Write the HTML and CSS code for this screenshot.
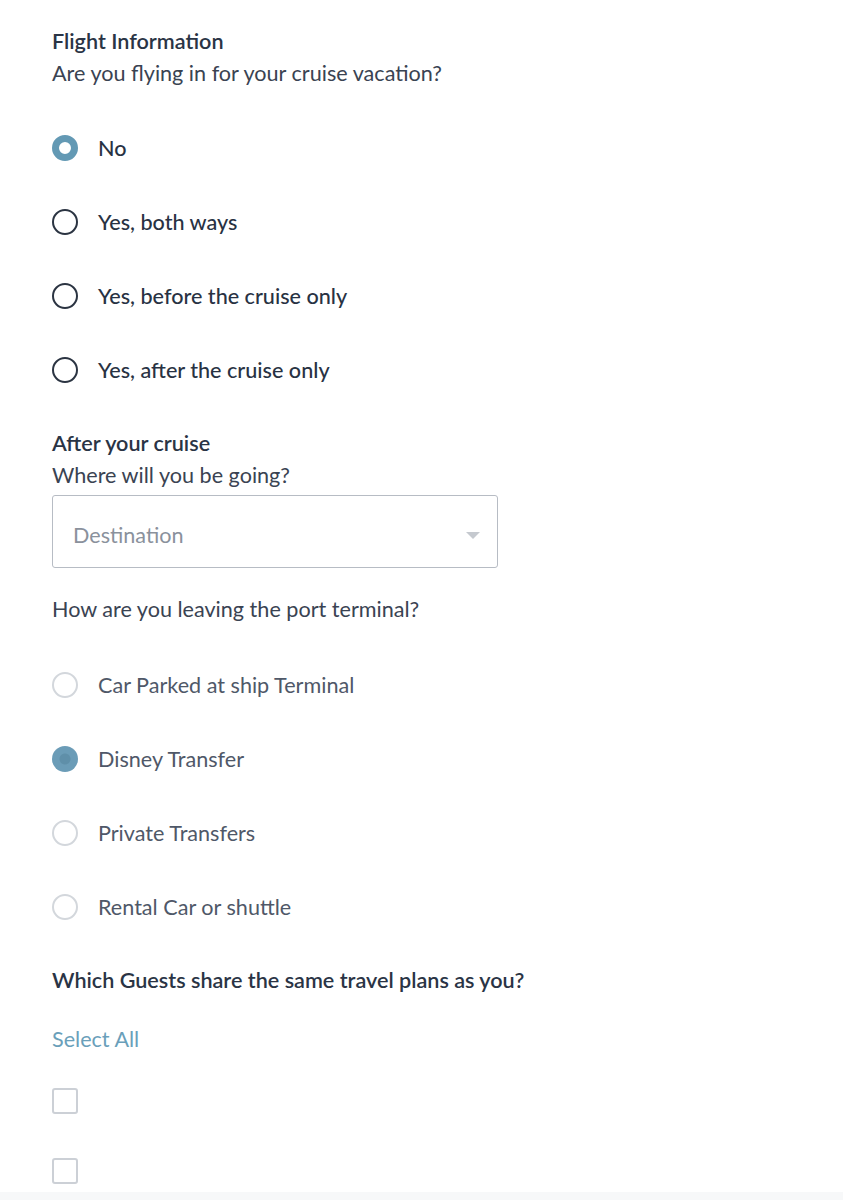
FILE: index.html
```html
<!DOCTYPE html>
<html lang="en">
<head>
<meta charset="utf-8">
<title>Flight Information</title>
<link rel="stylesheet" href="styles.css">
</head>
<body>
<main class="form">
  <section class="group">
    <h2 class="title">Flight Information</h2>
    <p class="question">Are you flying in for your cruise vacation?</p>
    <ul class="options dark">
      <li class="option"><span class="radio checked-ring"></span><span class="label">No</span></li>
      <li class="option"><span class="radio"></span><span class="label">Yes, both ways</span></li>
      <li class="option"><span class="radio"></span><span class="label">Yes, before the cruise only</span></li>
      <li class="option"><span class="radio"></span><span class="label">Yes, after the cruise only</span></li>
    </ul>
  </section>

  <section class="group after">
    <h2 class="title">After your cruise</h2>
    <p class="question">Where will you be going?</p>
    <div class="select">
      <span class="placeholder">Destination</span>
      <span class="caret"></span>
    </div>
    <p class="question leaving">How are you leaving the port terminal?</p>
    <ul class="options light">
      <li class="option"><span class="radio"></span><span class="label">Car Parked at ship Terminal</span></li>
      <li class="option"><span class="radio filled"></span><span class="label">Disney Transfer</span></li>
      <li class="option"><span class="radio"></span><span class="label">Private Transfers</span></li>
      <li class="option"><span class="radio"></span><span class="label">Rental Car or shuttle</span></li>
    </ul>
  </section>

  <section class="group guests">
    <h2 class="title">Which Guests share the same travel plans as you?</h2>
    <a class="select-all" href="#">Select All</a>
    <div class="checks">
      <span class="checkbox"></span>
      <span class="checkbox"></span>
    </div>
  </section>
</main>
<div class="footer-band"></div>
</body>
</html>
```

FILE: styles.css
```css
* { box-sizing: border-box; }
html, body { margin: 0; padding: 0; background: #fff; }
body {
  font-family: Lato, "Open Sans", "Liberation Sans", sans-serif;
  color: #2c3544;
  width: 843px;
  height: 1200px;
  overflow: hidden;
  position: relative;
}
.form { padding: 27px 0 0 52px; }
.title {
  margin: 0;
  font-size: 21.6px;
  font-weight: 600;
  line-height: 28px;
  color: #2a3445;
}
.question {
  margin: 4px 0 0;
  font-size: 21.6px;
  line-height: 28px;
  font-weight: 400;
  color: #3a4352;
}
.options { list-style: none; margin: 0; padding: 0; }
.options.dark { margin-top: 24px; }
.option {
  display: flex;
  align-items: center;
  gap: 20px;
  height: 74px;
}
.label { font-size: 21.6px; line-height: 28px; }
.dark .label { color: #283243; font-weight: 500; }
.light .label { color: #4f5868; }
.radio {
  width: 26px; height: 26px;
  border-radius: 50%;
  flex: none;
}
.dark .radio { border: 2.5px solid #2b3442; }
.dark .radio.checked-ring { border: 7px solid #6399b4; }
.light .radio { border: 2px solid #d3d7dc; }
.light .radio.filled {
  border: none;
  background: radial-gradient(circle, #5f8fa9 0 5px, #6b9cb7 6px);
}
.after { margin-top: 22px; }
.select {
  margin-top: 6px;
  width: 446px;
  height: 73px;
  border: 1px solid #b7bcc4;
  border-radius: 3px;
  display: flex;
  align-items: center;
  justify-content: space-between;
  padding: 6px 17px 0 20px;
}
.placeholder { font-size: 21.6px; color: #8a919c; }
.caret {
  width: 0; height: 0;
  border-left: 7px solid transparent;
  border-right: 7px solid transparent;
  border-top: 7px solid #c5c9cf;
  margin-top: 2px;
}
.leaving { margin-top: 27px; }
.options.light { margin-top: 25px; }
.guests { margin-top: 22px; }
.select-all {
  display: block;
  margin-top: 31px;
  font-size: 21.6px;
  line-height: 28px;
  color: #6a9fba;
  text-decoration: none;
}
.checks {
  display: flex;
  flex-direction: column;
  gap: 44px;
  margin-top: 35px;
}
.checkbox {
  width: 26px; height: 26px;
  border: 2px solid #ccd0d6;
  border-radius: 3px;
}
.footer-band {
  position: absolute;
  left: 0; right: 0; bottom: 0;
  height: 8px;
  background: #f7f8f9;
}
```
